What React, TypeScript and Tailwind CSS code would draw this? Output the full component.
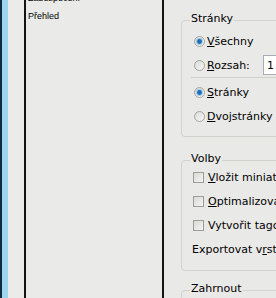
import React from 'react';

const ui = "font-['DejaVu_Sans',sans-serif] text-[11px] leading-[13px] text-black";

function Radio({ checked }: { checked?: boolean }) {
  return (
    <svg width="11" height="11" viewBox="0 0 11 11" className="shrink-0">
      <defs>
        <linearGradient id="radioFill" x1="0" y1="0" x2="1" y2="1">
          <stop offset="0" stopColor="#d6d6d2" />
          <stop offset="1" stopColor="#fbfbfb" />
        </linearGradient>
      </defs>
      <circle cx="5.5" cy="5.5" r="5" fill="url(#radioFill)" stroke="#a3a3a0" strokeWidth="1" />
      {checked && (
        <>
          <circle cx="5.5" cy="5.5" r="3.4" fill="#9cc9ea" />
          <circle cx="5.5" cy="5.5" r="2.4" fill="#1f6db3" />
        </>
      )}
    </svg>
  );
}

function Checkbox() {
  return (
    <svg width="11" height="11" viewBox="0 0 11 11" className="shrink-0">
      <defs>
        <linearGradient id="checkFill" x1="0" y1="0" x2="1" y2="1">
          <stop offset="0" stopColor="#d8d8d4" />
          <stop offset="1" stopColor="#f6f6f4" />
        </linearGradient>
      </defs>
      <rect x="0.5" y="0.5" width="10" height="10" fill="url(#checkFill)" stroke="#9c9c9a" />
    </svg>
  );
}

function Group({ label, className, children }: { label: string; className?: string; children?: React.ReactNode }) {
  return (
    <div className={`relative border border-[#d2d2cc] rounded-[4px] ${className ?? ''}`}>
      {/* legend sits over the top border */}
      <span className={`absolute -top-[9px] left-[8px] bg-[#e9e9e7] px-[1px] ${ui}`}>{label}</span>
      {children}
    </div>
  );
}

export default function App() {
  return (
    <div className="flex h-[298px] w-[276px] overflow-hidden bg-[#e9e9e7]">
      {/* window edge */}
      <div className="w-[2px] shrink-0 bg-[#0f2a3a]" />
      <div className="w-[6px] shrink-0 bg-[#9fd4ee]" />
      <div className="w-[16px] shrink-0 bg-[#ebebea]" />
      <div className="w-[2px] shrink-0 bg-[#141414]" />

      {/* list panel */}
      <div className="w-[136px] shrink-0 bg-[#eaeae8] pl-[2px] font-['Liberation_Sans',sans-serif] text-[9px] leading-[18px] text-black">
        <div className="-mt-[11px]">Zabezpečení</div>
        <div>Přehled</div>
      </div>
      <div className="w-[2px] shrink-0 bg-[#141414]" />

      {/* options panel */}
      <div className="flex-1 overflow-hidden">
        <div className="w-[300px] ml-[17px] mt-[20px] flex flex-col">
          <Group label="Stránky" className="pt-[8px] pb-[8px]">
            <div className={`h-[24px] flex items-center pl-[12px] gap-[2px] ${ui}`}>
              <Radio checked />
              <span><span className="underline">V</span>šechny</span>
            </div>
            <div className={`h-[24px] flex items-center pl-[12px] gap-[2px] ${ui}`}>
              <Radio />
              <span className="w-[54px]"><span className="underline">R</span>ozsah:</span>
              <div className="h-[20px] w-[80px] bg-white border border-[#a7adb4] pl-[3px] flex items-center">1</div>
            </div>
            <div className="ml-[9px] h-[1px] bg-[#d0d0ca]" />
            <div className="h-[2px]" />
            <div className={`h-[24px] flex items-center pl-[12px] gap-[2px] ${ui}`}>
              <Radio checked />
              <span><span className="underline">S</span>tránky</span>
            </div>
            <div className={`h-[24px] flex items-center pl-[12px] gap-[2px] ${ui}`}>
              <Radio />
              <span><span className="underline">D</span>vojstránky</span>
            </div>
          </Group>

          <Group label="Volby" className="mt-[23px] pt-[4px] pb-[9px]">
            <div className={`h-[24px] flex items-center pl-[11px] gap-[4px] ${ui}`}>
              <Checkbox />
              <span><span className="underline">V</span>ložit miniatury stránek</span>
            </div>
            <div className={`h-[24px] flex items-center pl-[11px] gap-[4px] ${ui}`}>
              <Checkbox />
              <span><span className="underline">O</span>ptimalizovat pro rychlé zobrazení</span>
            </div>
            <div className={`h-[24px] flex items-center pl-[11px] gap-[4px] ${ui}`}>
              <Checkbox />
              <span>Vytvořit tagovaný PDF</span>
            </div>
            <div className={`h-[24px] flex items-center pl-[10px] ${ui}`}>
              <span>Exportovat v<span className="underline">r</span>stvy</span>
            </div>
          </Group>

          <Group label="Zahrnout" className="mt-[19px] h-[40px]" />
        </div>
      </div>
    </div>
  );
}
